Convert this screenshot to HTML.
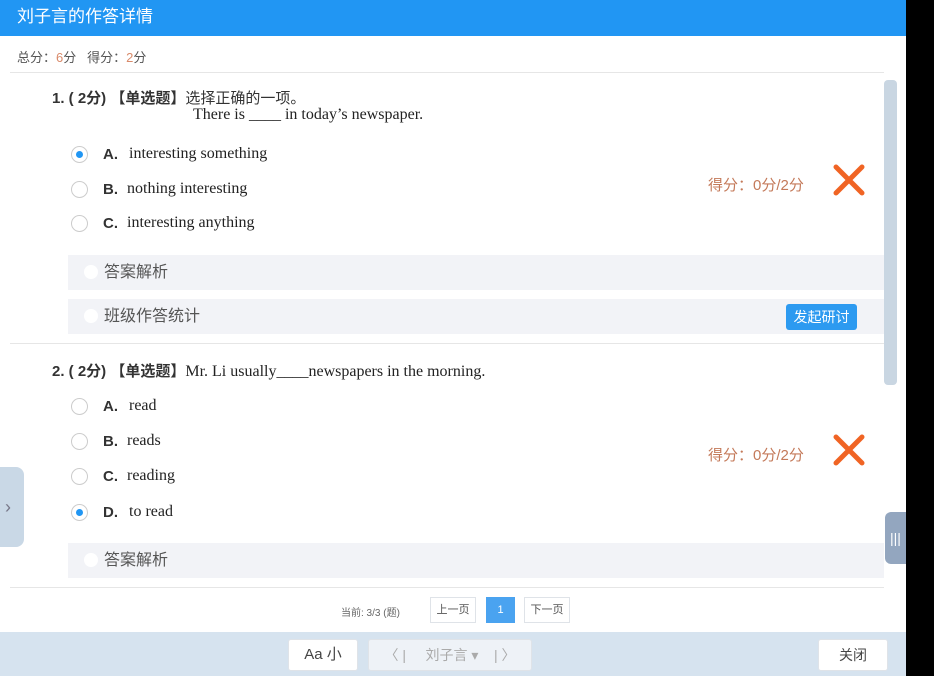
<!DOCTYPE html>
<html><head><meta charset="utf-8"><style>
*{margin:0;padding:0;box-sizing:border-box}
body{width:934px;height:676px;background:#000;position:relative;overflow:hidden;font-family:"Liberation Sans","Noto Sans CJK SC",sans-serif;color:#333}
.panel{position:absolute;left:0;top:0;width:906px;height:676px;background:#fff;overflow:hidden}
.hdr{position:absolute;left:0;top:0;width:906px;height:36px;background:#2196f3;color:#fff;font-size:17px;line-height:34px;padding-left:17px}
.a{position:absolute;white-space:nowrap}
.serif{font-family:"Liberation Serif","Noto Serif CJK SC",serif;font-size:16px;color:#222}
.radio{position:absolute;width:17px;height:17px;border:1px solid #ccc;border-radius:50%;background:#fff}
.radio.on::after{content:"";position:absolute;left:4px;top:4px;width:7px;height:7px;border-radius:50%;background:#2196f3}
.lt{position:absolute;font-weight:bold;font-size:15px;color:#333}
.bar{position:absolute;left:68px;width:816px;height:35px;background:#f2f3f7;font-size:16px;color:#555;line-height:35px;padding-left:36px}
.bar::before{content:"";position:absolute;left:16px;top:10px;width:14px;height:14px;border-radius:50%;background:#fff}
.hr{position:absolute;left:10px;width:874px;height:1px;background:#e6e6e6}
.sc{position:absolute;font-size:15px;color:#c47a5a}
.x{position:absolute;width:36px;height:36px}
.btn{position:absolute;border:1px solid #dfe3e8;background:#fff;font-size:11px;color:#555;text-align:center}
</style></head><body>
<div class="panel">
<div class="hdr">刘子言的作答详情</div>
<div class="a" style="left:17px;top:47px;font-size:13px;color:#555">总分：<span style="color:#d98a6a">6</span>分&nbsp;&nbsp;&nbsp;得分：<span style="color:#d98a6a">2</span>分</div>
<div class="hr" style="top:72px"></div>
<div style="position:absolute;left:884px;top:80px;width:13px;height:305px;background:#c9d6e2;border-radius:4px"></div>

<div class="a" style="left:52px;top:87px;font-size:15px"><b>1. ( 2分) 【单选题】</b>选择正确的一项。</div>
<div class="a serif" style="left:193px;top:106px">There is ____ in today’s newspaper.</div>
<div class="radio on" style="left:71px;top:146px"></div><div class="lt" style="left:103px;top:146px">A.</div><div class="a serif" style="left:129px;top:145px">interesting something</div>
<div class="radio" style="left:71px;top:181px"></div><div class="lt" style="left:103px;top:181px">B.</div><div class="a serif" style="left:127px;top:180px">nothing interesting</div>
<div class="radio" style="left:71px;top:215px"></div><div class="lt" style="left:103px;top:215px">C.</div><div class="a serif" style="left:127px;top:214px">interesting anything</div>
<div class="sc" style="left:708px;top:174px">得分：0分/2分</div>
<svg class="x" style="left:831px;top:162px" viewBox="0 0 36 36"><path d="M5 5L31 31M31 5L5 31" stroke="#f06424" stroke-width="5" stroke-linecap="round"/></svg>
<div class="bar" style="top:255px">答案解析</div>
<div class="bar" style="top:299px">班级作答统计</div>
<div class="a" style="left:786px;top:304px;width:71px;height:26px;background:#2d9af0;color:#fff;font-size:14px;line-height:26px;text-align:center;border-radius:3px">发起研讨</div>
<div class="hr" style="top:343px"></div>

<div class="a" style="left:52px;top:360px;font-size:15px"><b>2. ( 2分) 【单选题】</b><span class="serif">Mr. Li usually____newspapers in the morning.</span></div>
<div class="radio" style="left:71px;top:398px"></div><div class="lt" style="left:103px;top:398px">A.</div><div class="a serif" style="left:129px;top:397px">read</div>
<div class="radio" style="left:71px;top:433px"></div><div class="lt" style="left:103px;top:433px">B.</div><div class="a serif" style="left:127px;top:432px">reads</div>
<div class="radio" style="left:71px;top:468px"></div><div class="lt" style="left:103px;top:468px">C.</div><div class="a serif" style="left:127px;top:467px">reading</div>
<div class="radio on" style="left:71px;top:504px"></div><div class="lt" style="left:103px;top:504px">D.</div><div class="a serif" style="left:129px;top:503px">to read</div>
<div class="sc" style="left:708px;top:444px">得分：0分/2分</div>
<svg class="x" style="left:831px;top:432px" viewBox="0 0 36 36"><path d="M5 5L31 31M31 5L5 31" stroke="#f06424" stroke-width="5" stroke-linecap="round"/></svg>
<div class="bar" style="top:543px">答案解析</div>
<div class="hr" style="top:587px"></div>

<div class="a" style="left:341px;top:604px;font-size:10px;color:#666">当前: 3/3 (题)</div>
<div class="btn" style="left:430px;top:597px;width:46px;height:26px;line-height:24px">上一页</div>
<div class="a" style="left:486px;top:597px;width:29px;height:26px;background:#4aa3f0;color:#fff;font-size:11px;line-height:26px;text-align:center">1</div>
<div class="btn" style="left:524px;top:597px;width:46px;height:26px;line-height:24px">下一页</div>

<div style="position:absolute;left:0;top:632px;width:906px;height:44px;background:#d6e3ef"></div>
<div class="btn" style="left:288px;top:639px;width:70px;height:32px;line-height:30px;font-size:15px;border-radius:3px;color:#444">Aa 小</div>
<div class="btn" style="left:368px;top:639px;width:164px;height:32px;line-height:30px;font-size:14px;border-radius:3px;color:#aaa;background:#eef2f7">〈 |&nbsp;&nbsp;&nbsp;&nbsp;&nbsp;刘子言 ▾&nbsp;&nbsp;&nbsp;&nbsp;| 〉</div>
<div class="btn" style="left:818px;top:639px;width:70px;height:32px;line-height:30px;font-size:14px;border-radius:3px;color:#444">关闭</div>

<div style="position:absolute;left:0;top:467px;width:24px;height:80px;background:#c9d8e6;border-radius:0 8px 8px 0;color:#778;font-size:18px;line-height:80px;padding-left:5px">›</div>
<div style="position:absolute;left:885px;top:512px;width:21px;height:52px;background:#93a6bf;border-radius:6px 0 0 6px;color:#fff;font-size:14px;line-height:52px;text-align:center">|||</div>
</div>
</body></html>
